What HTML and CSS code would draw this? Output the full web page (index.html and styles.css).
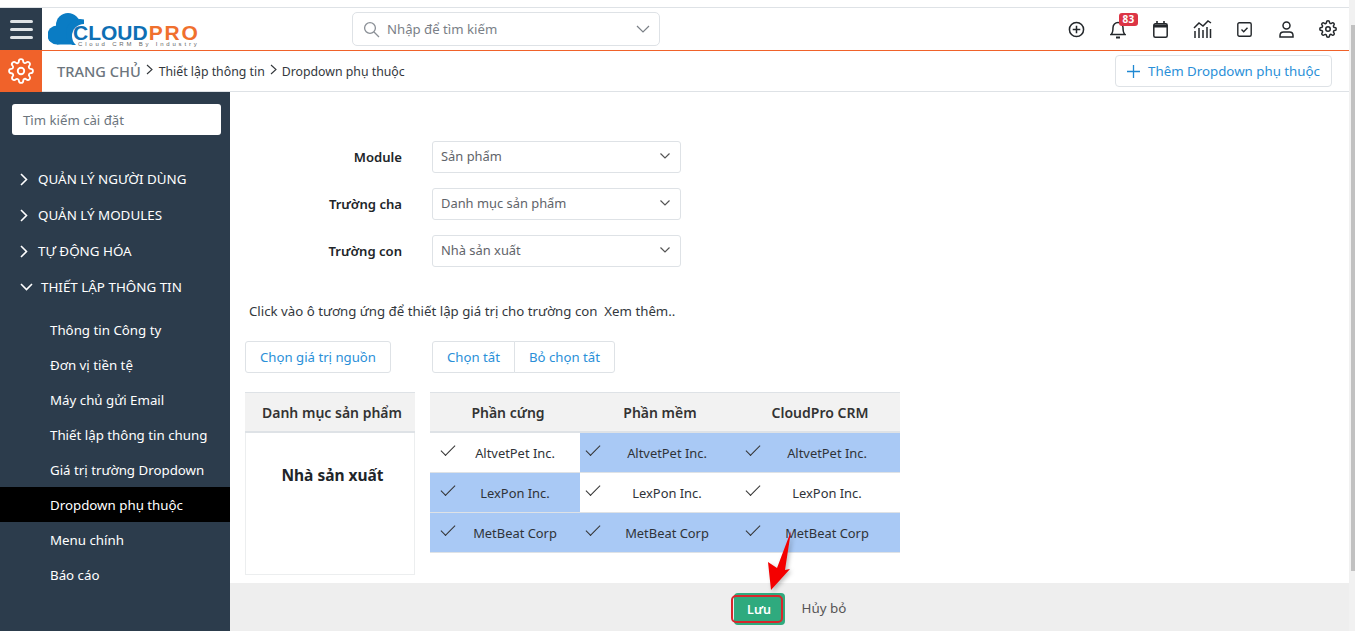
FILE: index.html
```html
<!DOCTYPE html>
<html lang="vi">
<head>
<meta charset="utf-8">
<title>Dropdown phụ thuộc</title>
<link rel="stylesheet" href="styles.css">
</head>
<body>
<div class="page">
  <header class="topbar">
    <button class="burger" aria-label="Menu"><span></span><span></span><span></span></button>
    <div class="logo">
      <svg class="logo-cloud" width="36" height="32" viewBox="0 0 36 32"><g fill="#0a7cc4"><circle cx="9" cy="22" r="9.500"/><circle cx="20" cy="12" r="12"/><rect x="9" y="14" width="18" height="17.500"/><circle cx="32" cy="20" r="14"/></g><circle cx="36" cy="23" r="12" fill="#fff"/></svg>
      <div class="logo-text"><span class="logo-cl">CLOUD</span><span class="logo-pro">PRO</span></div>
      <div class="logo-sub">Cloud CRM By Industry</div>
    </div>
    <div class="search">
      <svg width="17" height="17" viewBox="0 0 17 17" fill="none" stroke="#8a8f96" stroke-width="1.3"><circle cx="7" cy="7" r="5.400"/><path d="M11 11l5 5"/></svg>
      <span class="search-text">Nhập để tìm kiếm</span>
      <svg class="search-caret" width="14" height="8" viewBox="0 0 14 8" fill="none" stroke="#7b8087" stroke-width="1.2"><path d="M1 1l6 6 6-6"/></svg>
    </div>
    <nav class="tools">
      <div class="tool"><svg width="17" height="17" viewBox="0 0 18 18" fill="none" stroke="#23272b" stroke-width="1.600"><circle cx="9" cy="9" r="7.500"/><path d="M9 5v8M5 9h8"/></svg></div>
      <div class="tool bell">
        <svg width="16" height="19" viewBox="0 0 16 19" fill="none" stroke="#23272b" stroke-width="1.500"><path d="M1 14.500c2-1.500 2-3.500 2-7a5 5 0 0 1 10 0c0 3.500 0 5.500 2 7z"/><path d="M6 17.500h4" stroke-width="2"/></svg>
        <span class="badge">83</span>
      </div>
      <div class="tool"><svg width="15" height="17" viewBox="0 0 15 17" fill="none" stroke="#23272b" stroke-width="1.500"><rect x=".8" y="2.800" width="13.400" height="13.400" rx="1.500"/><path d="M1 5h13" stroke-width="3"/><path d="M4 0v3M11 0v3" stroke-width="1.600"/></svg></div>
      <div class="tool"><svg width="19" height="18" viewBox="0 0 19 18" fill="none" stroke="#23272b" stroke-width="1.500"><path d="M1 8l5-5 4 3 5-5 3 2"/><path d="M2 11v7M6 8v10M10 10v8M14 7v11M17.500 9v9"/></svg></div>
      <div class="tool"><svg width="15" height="15" viewBox="0 0 15 15" fill="none" stroke="#23272b" stroke-width="1.400"><rect x=".8" y=".8" width="13.400" height="13.400" rx="1.500"/><path d="M4.500 7.500l2.200 2.200 3.800-4"/></svg></div>
      <div class="tool"><svg width="15" height="17" viewBox="0 0 15 17" fill="none" stroke="#23272b" stroke-width="1.500"><circle cx="7.500" cy="4.500" r="3.500"/><path d="M1 16v-1.500c0-2 1.500-3.500 3.500-3.500h6c2 0 3.500 1.500 3.500 3.500V16z"/></svg></div>
      <div class="tool"><svg width="18" height="18" viewBox="0 0 24 24" fill="none" stroke="#23272b" stroke-width="2"><circle cx="12" cy="12" r="3"/><path d="M19.400 15a1.650 1.650 0 0 0 .33 1.820l.06.06a2 2 0 1 1-2.830 2.830l-.06-.06a1.650 1.650 0 0 0-1.820-.33 1.650 1.650 0 0 0-1 1.510V21a2 2 0 0 1-4 0v-.09A1.650 1.650 0 0 0 9 19.400a1.650 1.650 0 0 0-1.820.33l-.06.06a2 2 0 1 1-2.830-2.830l.06-.06a1.650 1.650 0 0 0 .33-1.820 1.650 1.650 0 0 0-1.510-1H3a2 2 0 0 1 0-4h.09A1.650 1.650 0 0 0 4.600 9a1.650 1.650 0 0 0-.33-1.820l-.06-.06a2 2 0 1 1 2.830-2.830l.06.06a1.650 1.650 0 0 0 1.820.33H9a1.650 1.650 0 0 0 1-1.510V3a2 2 0 0 1 4 0v.09a1.650 1.650 0 0 0 1 1.510 1.650 1.650 0 0 0 1.820-.33l.06-.06a2 2 0 1 1 2.830 2.830l-.06.06a1.650 1.650 0 0 0-.33 1.820V9a1.650 1.650 0 0 0 1.510 1H21a2 2 0 0 1 0 4h-.09a1.650 1.650 0 0 0-1.510 1z"/></svg></div>
    </nav>
  </header>

  <div class="crumbbar">
    <div class="gearbox">
      <svg width="26" height="26" viewBox="0 0 24 24" fill="none" stroke="#fff" stroke-width="1.700"><circle cx="12" cy="12" r="3"/><path d="M19.400 15a1.650 1.650 0 0 0 .33 1.820l.06.06a2 2 0 1 1-2.830 2.830l-.06-.06a1.650 1.650 0 0 0-1.820-.33 1.650 1.650 0 0 0-1 1.510V21a2 2 0 0 1-4 0v-.09A1.650 1.650 0 0 0 9 19.400a1.650 1.650 0 0 0-1.820.33l-.06.06a2 2 0 1 1-2.830-2.830l.06-.06a1.650 1.650 0 0 0 .33-1.820 1.650 1.650 0 0 0-1.510-1H3a2 2 0 0 1 0-4h.09A1.650 1.650 0 0 0 4.600 9a1.650 1.650 0 0 0-.33-1.820l-.06-.06a2 2 0 1 1 2.830-2.830l.06.06a1.650 1.650 0 0 0 1.820.33H9a1.650 1.650 0 0 0 1-1.510V3a2 2 0 0 1 4 0v.09a1.650 1.650 0 0 0 1 1.510 1.650 1.650 0 0 0 1.820-.33l.06-.06a2 2 0 1 1 2.830 2.830l-.06.06a1.650 1.650 0 0 0-.33 1.820V9a1.650 1.650 0 0 0 1.510 1H21a2 2 0 0 1 0 4h-.09a1.650 1.650 0 0 0-1.510 1z"/></svg>
    </div>
    <div class="crumbs">
      <span class="crumb-home">TRANG CHỦ</span>
      <svg class="crumb-sep" width="7" height="11" viewBox="0 0 7 11" fill="none" stroke="#33373b" stroke-width="1.100"><path d="M1 1l5 4.500-5 4.500"/></svg>
      <span class="crumb">Thiết lập thông tin</span>
      <svg class="crumb-sep" width="7" height="11" viewBox="0 0 7 11" fill="none" stroke="#33373b" stroke-width="1.100"><path d="M1 1l5 4.500-5 4.500"/></svg>
      <span class="crumb crumb-last">Dropdown phụ thuộc</span>
    </div>
    <button class="add-btn">
      <svg width="13" height="13" viewBox="0 0 13 13" fill="none" stroke="#1e88d2" stroke-width="1.300"><path d="M6.500 0v13M0 6.500h13"/></svg>
      Thêm Dropdown phụ thuộc
    </button>
  </div>

  <div class="body">
    <aside class="sidebar">
      <div class="side-search">Tìm kiếm cài đặt</div>
      <ul class="side-groups">
        <li class="group"><svg width="8" height="13" viewBox="0 0 8 13" fill="none" stroke="#fff" stroke-width="1.600"><path d="M1 1l5.500 5.500L1 12"/></svg>QUẢN LÝ NGƯỜI DÙNG</li>
        <li class="group"><svg width="8" height="13" viewBox="0 0 8 13" fill="none" stroke="#fff" stroke-width="1.600"><path d="M1 1l5.500 5.500L1 12"/></svg>QUẢN LÝ MODULES</li>
        <li class="group"><svg width="8" height="13" viewBox="0 0 8 13" fill="none" stroke="#fff" stroke-width="1.600"><path d="M1 1l5.500 5.500L1 12"/></svg>TỰ ĐỘNG HÓA</li>
        <li class="group group-open"><svg width="13" height="8" viewBox="0 0 13 8" fill="none" stroke="#fff" stroke-width="1.600"><path d="M1 1l5.500 5.500L12 1"/></svg>THIẾT LẬP THÔNG TIN</li>
      </ul>
      <ul class="side-items">
        <li>Thông tin Công ty</li>
        <li>Đơn vị tiền tệ</li>
        <li>Máy chủ gửi Email</li>
        <li>Thiết lập thông tin chung</li>
        <li>Giá trị trường Dropdown</li>
        <li class="active">Dropdown phụ thuộc</li>
        <li>Menu chính</li>
        <li>Báo cáo</li>
      </ul>
    </aside>

    <main class="content">
      <div class="scroll-area">
        <div class="form">
          <div class="row"><label>Module</label><div class="select">Sản phẩm<svg width="10" height="6" viewBox="0 0 10 6" fill="none" stroke="#555" stroke-width="1.200"><path d="M.5.5L5 5 9.500.5"/></svg></div></div>
          <div class="row"><label>Trường cha</label><div class="select">Danh mục sản phẩm<svg width="10" height="6" viewBox="0 0 10 6" fill="none" stroke="#555" stroke-width="1.200"><path d="M.5.5L5 5 9.500.5"/></svg></div></div>
          <div class="row"><label>Trường con</label><div class="select">Nhà sản xuất<svg width="10" height="6" viewBox="0 0 10 6" fill="none" stroke="#555" stroke-width="1.200"><path d="M.5.5L5 5 9.500.5"/></svg></div></div>
        </div>
        <p class="hint">Click vào ô tương ứng để thiết lập giá trị cho trường con&nbsp; Xem thêm..</p>
        <div class="actions">
          <button class="btn btn-source">Chọn giá trị nguồn</button>
          <div class="btn-group"><button class="btn">Chọn tất</button><button class="btn">Bỏ chọn tất</button></div>
        </div>
        <div class="tables">
          <div class="source-col">
            <div class="source-head">Danh mục sản phẩm</div>
            <div class="source-body">Nhà sản xuất</div>
          </div>
          <div class="grid">
            <div class="th">Phần cứng</div><div class="th">Phần mềm</div><div class="th">CloudPro CRM</div>
            <div class="cell">AltvetPet Inc.</div><div class="cell on">AltvetPet Inc.</div><div class="cell on">AltvetPet Inc.</div>
            <div class="cell on">LexPon Inc.</div><div class="cell">LexPon Inc.</div><div class="cell">LexPon Inc.</div>
            <div class="cell on">MetBeat Corp</div><div class="cell on">MetBeat Corp</div><div class="cell on">MetBeat Corp</div>
          </div>
        </div>
      </div>
      <footer class="footer">
        <button class="save">Lưu</button>
        <button class="cancel">Hủy bỏ</button>
      </footer>
      <svg class="arrow" width="26" height="62" viewBox="0 0 26 62"><polygon fill="#f40000" points="24,1 18,40 23,39 4,60 1,32 10,38"/></svg>
    </main>
  </div>
  <div class="scrollbar"><span class="thumb"></span></div>
</div>
</body>
</html>
```
FILE: styles.css
```css
* { box-sizing: border-box; }
html, body { margin: 0; height: 100%; overflow: hidden; background: #fff; }
body { font-family: "Noto Sans", "Open Sans", sans-serif; font-size: 13.2px; color: #212529; }
ul { list-style: none; margin: 0; padding: 0; }
button { font: inherit; background: none; border: 0; padding: 0; white-space: nowrap; }

.page { position: relative; height: 631px; padding-top: 7px; display: flex; flex-direction: column; }
.topbar { height: 44px; flex: none; display: flex; align-items: center; border-top: 1px solid #dee2e6; border-bottom: 1px solid #f0622a; padding-right: 6px; }
.burger { width: 42px; height: 42px; background: #2c3c4c; display: flex; flex-direction: column; gap: 5px; justify-content: center; align-items: center; flex: none; }
.burger span { width: 23px; height: 3px; border-radius: 2px; background: #dfe3e6; }

.logo { position: relative; width: 310px; height: 42px; flex: none; }
.logo-cloud { position: absolute; left: 6px; top: 5px; }
.logo-text { position: absolute; left: 31px; top: 17px; font-family: "Liberation Sans", sans-serif; font-weight: 700; font-size: 21px; line-height: 16px; letter-spacing: 0; white-space: nowrap; }
.logo-cl { color: #0e6fb4; }
.logo-pro { color: #f0702e; letter-spacing: 1.800px; margin-left: 1px; }
.logo-sub { position: absolute; left: 36px; top: 33px; font-family: "Liberation Sans", sans-serif; font-size: 6px; line-height: 6px; letter-spacing: 2.800px; color: #666; white-space: nowrap; }

.search { width: 308px; height: 34px; border: 1px solid #dee2e6; border-radius: 5px; display: flex; align-items: center; padding: 0 9px 0 10px; flex: none; }
.search-text { margin-left: 7px; flex: 1; color: #7a8087; }
.tools { margin-left: auto; display: flex; align-items: center; }
.tool { width: 42px; display: flex; justify-content: center; align-items: center; }
.tool svg { display: block; }
.bell { position: relative; }
.badge { position: absolute; left: 22px; top: -7px; width: 19px; text-align: center; background: #dc3545; color: #fff; font-size: 10px; font-weight: 700; line-height: 13px; border-radius: 3px; letter-spacing: .3px; }

.crumbbar { height: 41px; flex: none; display: flex; align-items: center; border-bottom: 1px solid #dee2e6; padding-right: 23px; }
.gearbox { width: 42px; height: 41px; background: #f0622a; display: flex; align-items: center; justify-content: center; flex: none; margin-bottom: -1px; padding-bottom: 2px; }
.crumbs { display: flex; align-items: center; padding-left: 15px; }
.crumb-home { font-size: 14.6px; color: #6c757d; font-weight: 500; }
.crumb-sep { margin: 0 6px 0 5px; position: relative; top: -2px; }
.crumb { font-size: 12.3px; color: #33383d; }
.crumb-last { margin-left: -1px; }
.add-btn { margin-left: auto; width: 217px; height: 32px; border: 1px solid #dee2e6; border-radius: 4px; color: #2a8fd8; display: flex; align-items: center; gap: 8px; justify-content: center; font-size: 13.300px; }

.body { flex: 1; display: flex; min-height: 0; }
.sidebar { width: 230px; flex: none; background: #2c3c4c; padding-top: 12px; color: #fff; }
.side-search { margin: 0 9px 0 12px; height: 31px; background: #fff; border-radius: 3px; color: #6c757d; padding: 0 11px; line-height: 32px; }
.side-groups { margin-top: 26px; }
.group { height: 36px; display: flex; align-items: center; gap: 10px; padding-left: 20px; font-size: 13.400px; }
.group-open { gap: 8px; }
.side-items { margin-top: 7px; }
.side-items li { height: 35px; line-height: 37px; padding-left: 50px; font-size: 13.300px; }
.side-items .active { background: #000; }

.content { position: relative; flex: 1; display: flex; flex-direction: column; min-width: 0; }
.scroll-area { flex: 1; padding: 49px 0 0 15px; min-height: 0; }
.row { display: flex; align-items: center; height: 32px; margin-bottom: 15px; }
.row label { width: 157px; text-align: right; font-weight: 600; font-size: 13.100px; color: #212529; }
.select { margin-left: 30px; width: 249px; height: 32px; border: 1px solid #dee2e6; border-radius: 3px; display: flex; align-items: center; justify-content: space-between; padding: 0 10px 2px 8px; font-size: 12.900px; color: #5f646a; }
.hint { margin: 34px 0 0 4px; line-height: 20px; color: #33383d; font-size: 13.250px; }
.actions { display: flex; margin-top: 20px; }
.btn { height: 32px; border: 1px solid #dee2e6; color: #2a8fd8; background: #fff; }
.btn-source { width: 146px; border-radius: 3px; }
.btn-group { margin-left: 41px; display: flex; }
.btn-group .btn:first-child { width: 83px; border-radius: 3px 0 0 3px; }
.btn-group .btn:last-child { width: 101px; margin-left: -1px; border-radius: 0 3px 3px 0; }
.tables { display: flex; margin-top: 19px; gap: 15px; align-items: flex-start; }
.source-col { width: 170px; height: 183px; border: 1px solid #eceeef; }
.source-head { height: 41px; background: #f2f2f2; border-bottom: 2px solid #dee2e6; border-top: 1px solid #dee2e6; margin: -1px -1px 0; padding-left: 4px; text-align: center; line-height: 40px; font-weight: 600; font-size: 14px; color: #333; }
.source-body { text-align: center; font-weight: 700; font-size: 15.500px; padding: 31px 0 0 5px; color: #212529; }
.grid { width: 470px; display: grid; grid-template-columns: 150px 160px 160px; grid-template-rows: 41px repeat(3, 40px); }
.th { background: #f2f2f2; border-top: 1px solid #dee2e6; border-bottom: 2px solid #dee2e6; text-align: center; line-height: 40px; font-weight: 600; font-size: 14px; color: #333; }
.th:first-child { padding-left: 6px; }
.cell { position: relative; border-bottom: 1px solid #dee2e6; padding-left: 14px; text-align: center; line-height: 40px; font-size: 12.900px; color: #2f3338; }
.cell::before { content: ""; position: absolute; left: 6px; top: 12px; width: 13px; height: 6px; border-left: 1.200px solid #333; border-bottom: 1.200px solid #333; transform: rotate(-45deg); }
.cell:nth-child(3n+1) { padding-left: 20px; }
.cell:nth-child(3n+1)::before { left: 11px; }
.cell.on { background: #a9c9f5; }

.footer { height: 48px; flex: none; background: #eee; display: flex; align-items: center; justify-content: center; gap: 17px; margin-right: 6px; padding: 2px 0 0 0; }
.save { position: relative; width: 51px; height: 32px; margin: 2px 0 0 1px; background: #2faa7e; color: #fff; border-radius: 4px; font-size: 12.500px; font-weight: 600; }
.save::after { content: ""; box-sizing: border-box; position: absolute; left: -3px; top: 2px; width: 52px; height: 28px; border: 2px solid #d8262c; border-radius: 5px; }
.cancel { color: #555; font-size: 13.400px; }
.arrow { position: absolute; left: 537px; top: 438px; filter: drop-shadow(2px 2px 2px rgba(0,0,0,.25)); }
.scrollbar { position: absolute; right: 0; top: 0; bottom: 0; width: 6px; background: #f1f1f1; }
.thumb { position: absolute; left: 2px; right: 0; top: 25px; height: 546px; background: #c1c1c1; }
```
